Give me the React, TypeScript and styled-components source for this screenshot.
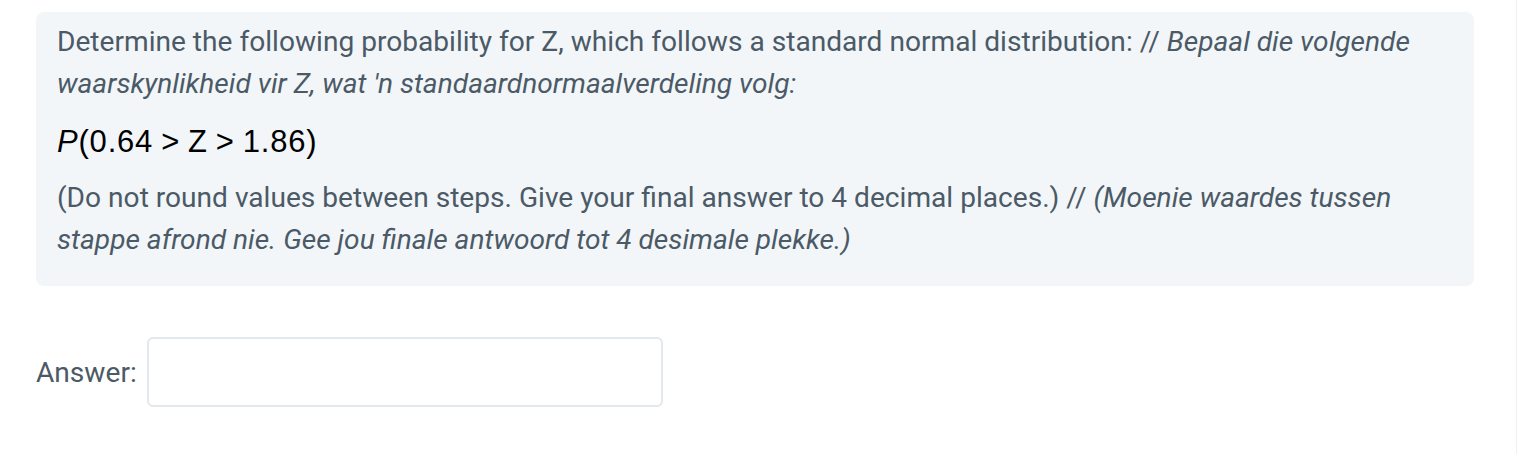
import React from "react";
import styled, { createGlobalStyle } from "styled-components";

const GlobalStyle = createGlobalStyle`
  html, body {
    margin: 0;
    padding: 0;
    background: #fff;
  }
  body {
    font-family: Roboto, "Liberation Sans", sans-serif;
    color: #4b5a66;
  }
`;

const Page = styled.div`
  display: flex;
  width: 1518px;
  height: 454px;
  overflow: hidden;
`;

const Main = styled.main`
  flex: 1;
  padding: 12px 42px 0 36px;
`;

const Edge = styled.div`
  width: 1px;
  border-left: 1px solid #eef1f4;
`;

const Formulation = styled.div`
  background: #f2f6f9;
  border-radius: 8px;
  padding: 9px 21px 10px;
`;

const Para = styled.p`
  margin: 0 0 14px;
  font-size: 28.125px;
  line-height: 42px;
  &:last-child {
    margin-bottom: 15px;
  }
`;

const Afr = styled.em`
  font-style: italic;
`;

const MathLine = styled.div`
  font-family: "Liberation Sans", Arial, sans-serif;
  font-size: 31px;
  letter-spacing: 0.8px;
  line-height: 42px;
  color: #000;
  padding-top: 2px;
  margin: 0 0 14px;
`;

const MathVar = styled.i<{ $upright?: boolean }>`
  font-style: ${(p) => (p.$upright ? "normal" : "italic")};
`;

const Op = styled.span`
  margin: 0 8px;
`;

const AnswerRow = styled.div`
  display: flex;
  align-items: center;
  gap: 10px;
  margin-top: 51px;
`;

const Label = styled.label`
  font-size: 28.125px;
  color: #4b5a66;
`;

const Input = styled.input`
  width: 516px;
  height: 70px;
  box-sizing: border-box;
  border: 2px solid #e3e8ec;
  border-radius: 6px;
  background: #fff;
  outline: none;
  font-family: Roboto, sans-serif;
  font-size: 28px;
  padding: 0 14px;
`;

export default function App() {
  return (
    <>
      <GlobalStyle />
      <Page>
        <Main>
          <Formulation>
            <Para>
              Determine the following probability for Z, which follows a standard normal
              distribution: // <Afr>Bepaal die volgende waarskynlikheid vir Z, wat 'n standaardnormaalverdeling volg:</Afr>
            </Para>
            <MathLine>
              <MathVar>P</MathVar>(0.64<Op>&gt;</Op><MathVar $upright>Z</MathVar><Op>&gt;</Op>1.86)
            </MathLine>
            <Para>
              (Do not round values between steps. Give your final answer to 4 decimal places.) //{" "}
              <Afr>(Moenie waardes tussen stappe afrond nie. Gee jou finale antwoord tot 4 desimale plekke.)</Afr>
            </Para>
          </Formulation>
          <AnswerRow>
            <Label htmlFor="answer">Answer:</Label>
            <Input id="answer" type="text" />
          </AnswerRow>
        </Main>
        <Edge />
      </Page>
    </>
  );
}
